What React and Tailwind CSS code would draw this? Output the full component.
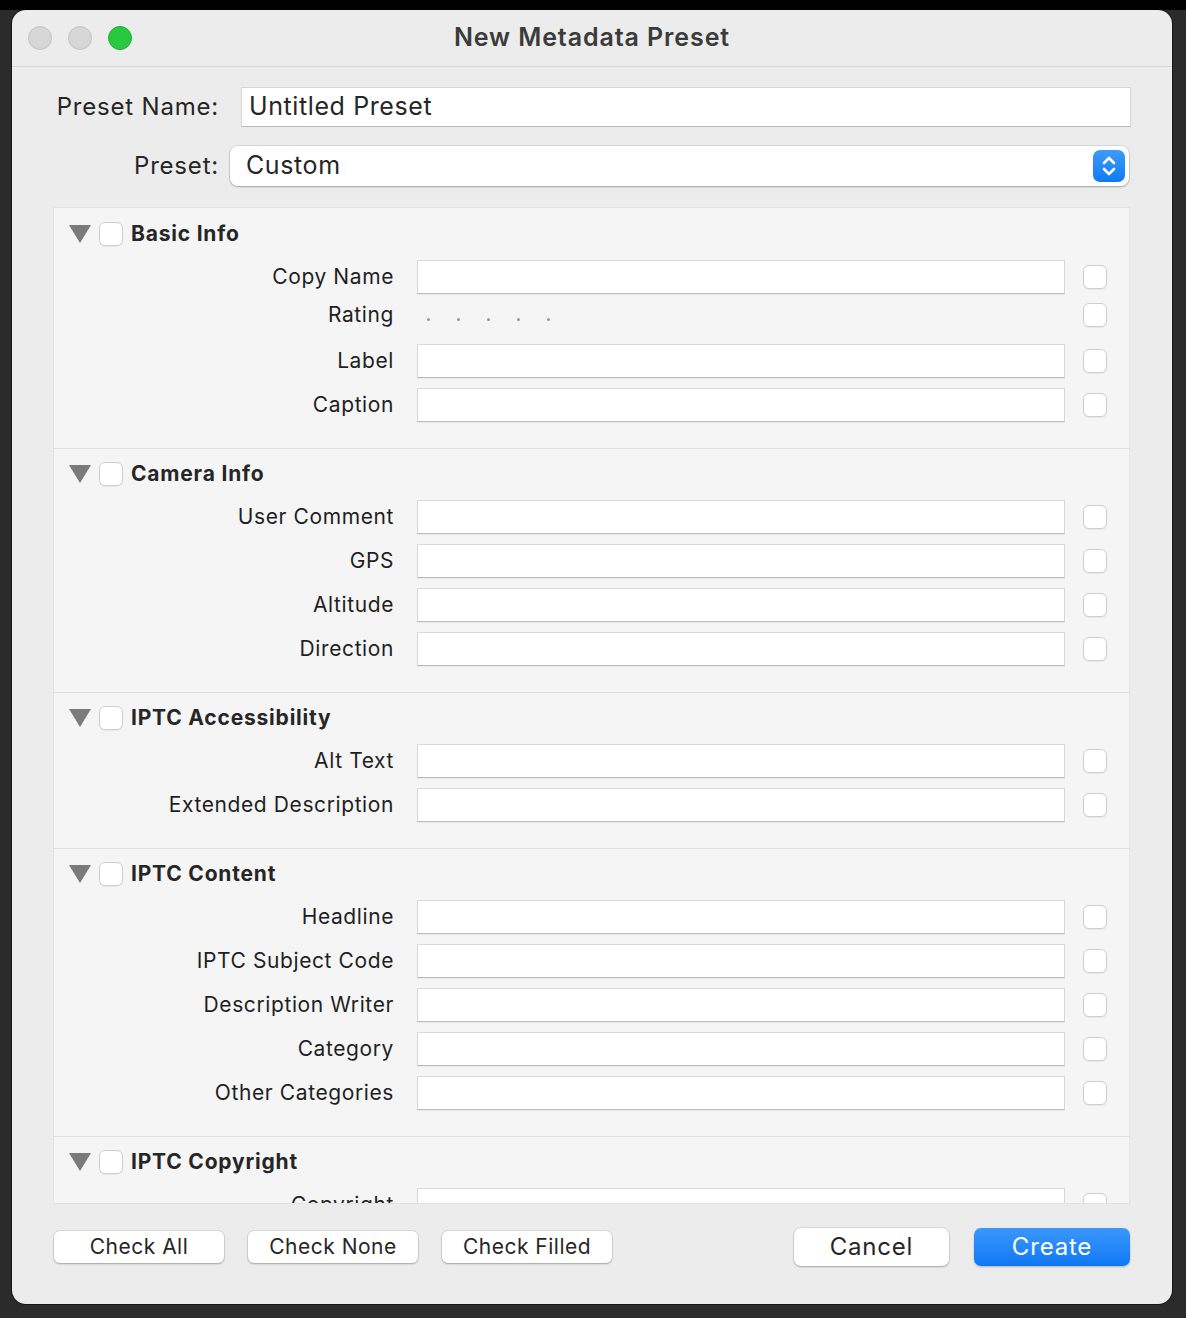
import React from 'react';

const sections = [
  { title: 'Basic Info', rows: ['Copy Name', 'Rating', 'Label', 'Caption'] },
  { title: 'Camera Info', rows: ['User Comment', 'GPS', 'Altitude', 'Direction'] },
  { title: 'IPTC Accessibility', rows: ['Alt Text', 'Extended Description'] },
  { title: 'IPTC Content', rows: ['Headline', 'IPTC Subject Code', 'Description Writer', 'Category', 'Other Categories'] },
  { title: 'IPTC Copyright', rows: ['Copyright', 'Copyright Status'] },
];

function Box({ className = '' }) {
  return (
    <div className={`w-[24px] h-[24px] rounded-[6px] bg-white border border-[#cfcfcf] shadow-[0_1px_1px_rgba(0,0,0,0.06)] ${className}`} />
  );
}

function Field() {
  return (
    <div className="w-[648px] h-[34px] bg-white border border-[#d9d9d9] border-b-[#bdbdbd] shadow-[0_1px_0_rgba(0,0,0,0.05)]" />
  );
}

function Row({ label }) {
  const isRating = label === 'Rating';
  return (
    <div className={`flex items-center ${isRating ? 'h-[40px] pb-2' : 'h-[44px]'}`}>
      <div className="w-[340px] text-right text-[21px] tracking-[0.6px] text-[#1f1f1f] whitespace-nowrap">{label}</div>
      <div className="ml-[23px]">
        {isRating ? (
          <div className="w-[648px] flex items-center gap-[27px] pl-[10px] pt-2">
            {[0, 1, 2, 3, 4].map((i) => (
              <div key={i} className="w-[3px] h-[3px] rounded-full bg-[#9a9a9a]" />
            ))}
          </div>
        ) : (
          <Field />
        )}
      </div>
      <Box className="ml-[18px]" />
    </div>
  );
}

function Section({ s, first }) {
  return (
    <div className={`${first ? 'pt-[10px]' : 'pt-[9px] border-t border-[#dedede]'} pb-[21px]`}>
      <div className="h-[32px] flex items-center pl-[15px]">
        <svg width="22" height="18" viewBox="0 0 22 18">
          <path d="M0 0 L22 0 L11 18 Z" fill="#7b7b7b" />
        </svg>
        <Box className="ml-[8px]" />
        <div className="ml-[8px] text-[21px] font-bold tracking-[0.8px] text-[#262626]">{s.title}</div>
      </div>
      <div className="mt-[5px]">
        {s.rows.map((r) => (
          <Row key={r} label={r} />
        ))}
      </div>
    </div>
  );
}

export default function App() {
  return (
    <div className="w-[1186px] h-[1318px] bg-[#2b2b2b] overflow-hidden relative" style={{ fontFamily: 'Inter, "Liberation Sans", Arial, sans-serif' }}>
      <div className="h-[10px] bg-black" />
      <div className="ml-[12px] w-[1160px] h-[1294px] rounded-[14px] bg-[#ececec] overflow-hidden shadow-[0_0_0_1px_rgba(0,0,0,0.5)] flex flex-col">
        {/* title bar */}
        <div className="h-[57px] flex items-center border-b border-[#d4d4d4] relative shrink-0">
          <div className="flex items-center gap-[16px] pl-[16px]">
            <div className="w-[24px] h-[24px] rounded-full bg-[#d7d7d7] border border-[#c4c4c4]" />
            <div className="w-[24px] h-[24px] rounded-full bg-[#d7d7d7] border border-[#c4c4c4]" />
            <div className="w-[24px] h-[24px] rounded-full bg-[#2ac840] border border-[#22b038]" />
          </div>
          <div className="absolute left-0 right-0 text-center text-[25px] font-semibold tracking-[0.9px] text-[#3b3b3b] pointer-events-none">
            New Metadata Preset
          </div>
        </div>

        {/* preset fields */}
        <div className="pt-[20px] pr-[41px]">
          <div className="flex items-center h-[40px]">
            <div className="w-[207px] text-right text-[24px] tracking-[0.8px] text-[#262626] whitespace-nowrap">Preset Name:</div>
            <div className="ml-[22px] flex-1 h-[40px] bg-white border border-[#d6d6d6] border-b-[#b9b9b9] flex items-center pl-[7px] text-[25px] tracking-[0.6px] text-[#262626]">
              Untitled Preset
            </div>
          </div>
          <div className="flex items-center h-[40px] mt-[19px]">
            <div className="w-[207px] text-right text-[24px] tracking-[0.8px] text-[#262626]">Preset:</div>
            <div className="ml-[11px] flex-1 mr-[2px] h-[40px] bg-white rounded-[8px] shadow-[0_0_0_1px_rgba(0,0,0,0.08),0_1px_2px_rgba(0,0,0,0.25)] flex items-center pl-[16px] pr-[4px] text-[25px] tracking-[0.6px] text-[#262626]">
              <span className="flex-1">Custom</span>
              <div className="w-[32px] h-[32px] rounded-[7px] bg-gradient-to-b from-[#3d9bfc] to-[#0b7af5] flex items-center justify-center">
                <svg width="16" height="24" viewBox="0 0 16 24" fill="none" stroke="white" strokeWidth="2.6" strokeLinecap="round" strokeLinejoin="round">
                  <path d="M3 9 L8 4 L13 9" />
                  <path d="M3 15 L8 20 L13 15" />
                </svg>
              </div>
            </div>
          </div>
        </div>

        {/* scroll panel */}
        <div className="ml-[41px] mt-[21px] w-[1077px] h-[997px] bg-[#f5f5f5] border border-[#e3e3e3] overflow-hidden shrink-0">
          {sections.map((s, i) => (
            <Section key={s.title} s={s} first={i === 0} />
          ))}
        </div>

        {/* bottom buttons */}
        <div className="flex items-center pl-[42px] pr-[42px] mt-[24px]">
          {['Check All', 'Check None', 'Check Filled'].map((b, i) => (
            <div
              key={b}
              className={`w-[170px] h-[32px] rounded-[6px] bg-white shadow-[0_0_0_1px_rgba(0,0,0,0.07),0_1px_2px_rgba(0,0,0,0.25)] flex items-center justify-center text-[21px] tracking-[0.5px] text-[#262626] whitespace-nowrap ${i > 0 ? 'ml-[24px]' : ''}`}
            >
              {b}
            </div>
          ))}
          <div className="flex-1" />
          <div className="w-[155px] h-[38px] rounded-[7px] bg-white shadow-[0_0_0_1px_rgba(0,0,0,0.07),0_1px_2px_rgba(0,0,0,0.25)] flex items-center justify-center text-[24px] tracking-[0.8px] text-[#262626]">
            Cancel
          </div>
          <div className="ml-[25px] w-[156px] h-[38px] rounded-[7px] bg-gradient-to-b from-[#3a97fc] to-[#0a78f4] shadow-[0_1px_2px_rgba(0,0,0,0.25)] flex items-center justify-center text-[24px] tracking-[0.8px] text-white">
            Create
          </div>
        </div>
      </div>
    </div>
  );
}
